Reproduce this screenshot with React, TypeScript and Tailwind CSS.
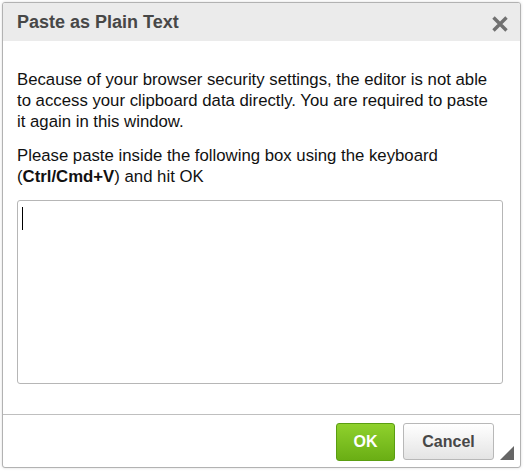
import React from 'react';

const PasteDialog: React.FC = () => {
  return (
    <div className="w-[524px] h-[473px] bg-white p-[2px] font-['Liberation_Sans',Arial,sans-serif]">
      <div className="relative flex flex-col w-[519px] h-[466px] border border-[#b2b2b2] rounded-[3px] bg-white overflow-hidden shadow-[0_0_3px_rgba(0,0,0,0.15)]">
        {/* Header */}
        <div className="flex items-center justify-between h-[38px] bg-[#ebebeb] pl-[14px] pr-[11px]">
          <h2 className="text-[18px] font-bold text-[#474747] leading-none">Paste as Plain Text</h2>
          <svg width="18" height="18" viewBox="0 0 18 18" className="mt-[3px]">
            <path d="M2.5 2.5 L15.5 15.5 M15.5 2.5 L2.5 15.5" stroke="#717171" strokeWidth="3.4" strokeLinecap="butt" />
          </svg>
        </div>

        {/* Content */}
        <div className="flex-1 px-[14px] pt-[28px] text-[16.75px] leading-[21px] text-[#111111]">
          <p className="w-[478px]">
            Because of your browser security settings, the editor is not able to access your clipboard data
            directly. You are required to paste it again in this window.
          </p>
          <p className="mt-[13px] w-[478px]">
            Please paste inside the following box using the keyboard (<strong>Ctrl/Cmd+V</strong>) and hit OK
          </p>
          <div className="mt-[13px] h-[184px] w-[486px] border border-[#b6b6b6] rounded-[3px] bg-white px-[4px] pt-[6px]">
            <div className="w-[1px] h-[23px] bg-black" />
          </div>
        </div>

        {/* Footer */}
        <div className="h-[53px] border-t border-[#bfbfbf] flex items-start justify-end gap-[8px] pt-[8px] pr-[26px]">
          <button className="w-[59px] h-[38px] rounded-[3px] border border-[#5a9e11] bg-gradient-to-b from-[#8fd12c] to-[#6aae14] text-white text-[16px] font-bold">
            OK
          </button>
          <button className="w-[91px] h-[37px] rounded-[3px] border border-[#b8b8b8] bg-gradient-to-b from-[#ffffff] to-[#e4e4e4] text-[#474747] text-[16px] font-bold">
            Cancel
          </button>
        </div>

        {/* Resize handle */}
        <div className="absolute right-[6px] bottom-[7px] w-0 h-0 border-l-[14px] border-l-transparent border-b-[14px] border-b-[#666666]" />
      </div>
    </div>
  );
};

export default function App() {
  return <PasteDialog />;
}
